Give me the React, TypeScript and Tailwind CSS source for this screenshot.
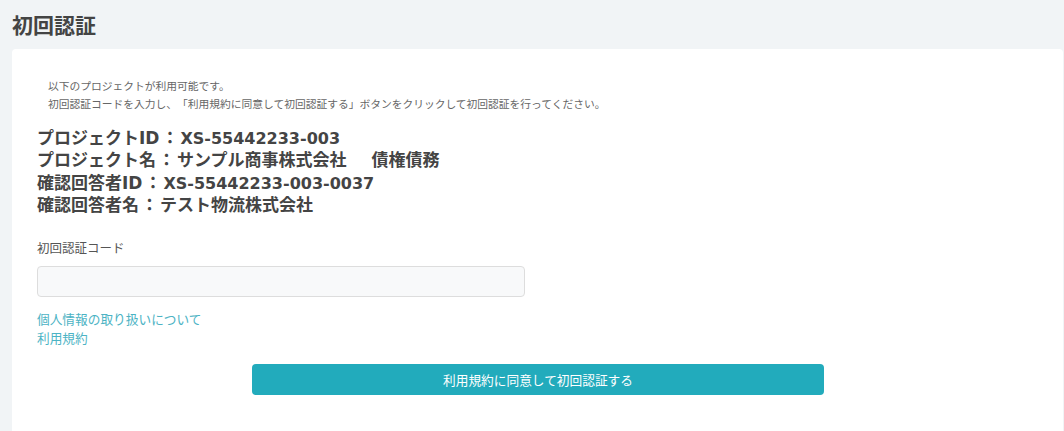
function Colon() {
  return <span className="inline-block px-[2px]">：</span>
}

export default function App() {
  return (
    <div
      className="min-h-[431px] w-[1064px] bg-[#f1f4f6] pr-[1px] [text-spacing-trim:space-all]"
      style={{ fontFamily: '"Noto Sans CJK JP", "DejaVu Sans", sans-serif' }}
    >
      <h1 className="h-[49px] pl-[12px] pt-[8px] text-[21px] leading-[32px] font-bold text-[#444]">初回認証</h1>

      <div className="min-h-[382px] rounded-t-[4px] ml-[12px] bg-white pl-[25px] pt-[28px]">
        <div className="pl-[11px] text-[10.75px] leading-[18px] text-[#666]">
          <p>以下のプロジェクトが利用可能です。</p>
          <p>初回認証コードを入力し、「利用規約に同意して初回認証する」ボタンをクリックして初回認証を行ってください。</p>
        </div>

        <div
          className="mt-[14px] text-[17px] leading-[22px] font-bold text-[#444]"
          style={{ fontFamily: '"DejaVu Sans", "Noto Sans CJK JP", sans-serif' }}
        >
          <p className="h-[22.4px]">
            プロジェクトID<Colon />
            <span className="text-[16px]">XS-55442233-003</span>
          </p>
          <p className="h-[22.4px]">
            プロジェクト名<Colon />サンプル商事株式会社<span className="inline-block w-[25px]" />債権債務
          </p>
          <p className="h-[22.4px]">
            確認回答者ID<Colon />
            <span className="text-[16px]">XS-55442233-003-0037</span>
          </p>
          <p className="h-[22.4px]">
            確認回答者名<Colon />テスト物流株式会社
          </p>
        </div>

        <label className="mt-[22px] block text-[12.5px] leading-[18px] text-[#555]">初回認証コード</label>
        <input
          type="text"
          className="mt-[9px] block h-[31px] w-[488px] rounded-[4px] border border-[#ddd] bg-[#f8f9fa] px-2 text-[13px] outline-none"
        />

        <div className="mt-[12px] flex flex-col text-[12.7px] leading-[19px] text-[#4cb3c4]">
          <a href="#" className="w-fit">個人情報の取り扱いについて</a>
          <a href="#" className="w-fit">利用規約</a>
        </div>

        <div className="mt-[17px] pl-[215px]">
          <button className="h-[31px] w-[572px] rounded-[4px] bg-[#22abbc] text-[12.7px] text-white">
            利用規約に同意して初回認証する
          </button>
        </div>
      </div>
    </div>
  )
}
